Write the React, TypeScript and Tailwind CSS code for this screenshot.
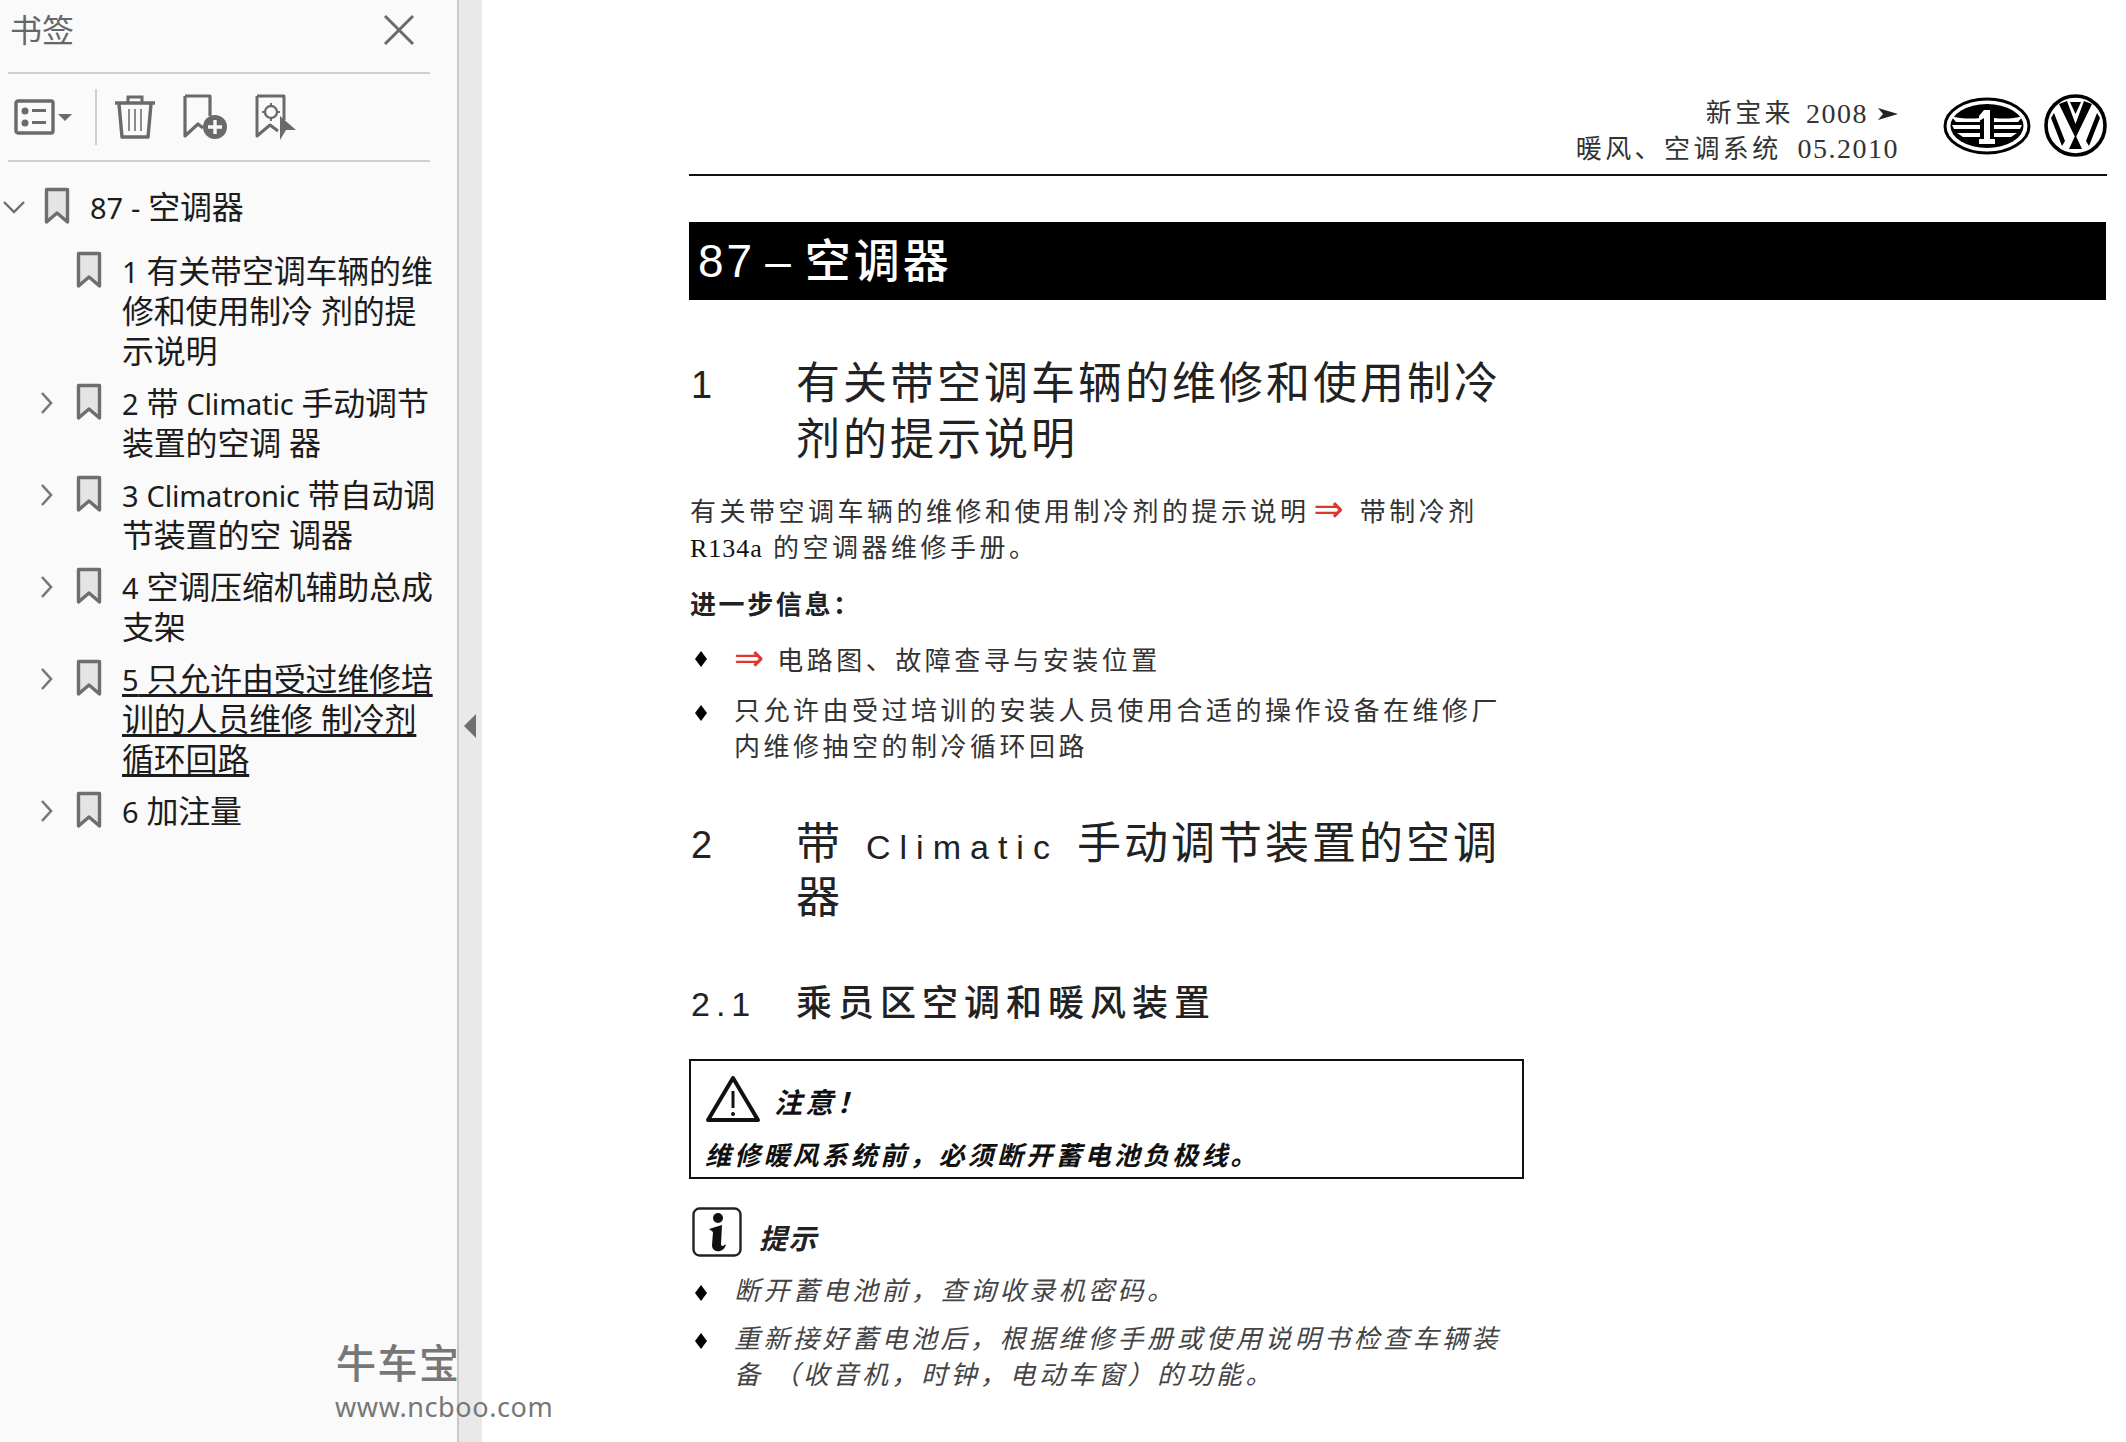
import React from "react";

const cjk = '"Noto Sans", "Noto Sans CJK SC", sans-serif';
const doc = '"Liberation Serif", "Noto Sans CJK SC", serif';

function Bookmark() {
  return (
    <svg width="26" height="38" viewBox="0 0 26 38" className="shrink-0">
      <path d="M2.5 2.5 H23.5 V35 L13 26 L2.5 35 Z" fill="#e4e4e4" stroke="#6e6e6e" strokeWidth="3.4" strokeLinejoin="round" />
    </svg>
  );
}

function Chevron({ open }: { open?: boolean }) {
  return open ? (
    <svg width="24" height="14" viewBox="0 0 24 14" className="shrink-0">
      <path d="M2 2 L12 12 L22 2" fill="none" stroke="#6e6e6e" strokeWidth="2.4" />
    </svg>
  ) : (
    <svg width="13" height="24" viewBox="0 0 13 24" className="shrink-0">
      <path d="M2 2 L11 12 L2 22" fill="none" stroke="#777" strokeWidth="2.6" />
    </svg>
  );
}

function Label({ text }: { text: string }) {
  return (
    <>
      {text.split(/([A-Za-z0-9\-]+)/).map((part, i) =>
        /^[A-Za-z0-9\-]+$/.test(part) ? (
          <span key={i} className="text-[29px] leading-none">{part}</span>
        ) : (
          <span key={i}>{part}</span>
        )
      )}
    </>
  );
}

function Item({ lines, chevron = true, underline = false }: { lines: string[]; chevron?: boolean; underline?: boolean }) {
  return (
    <div className="flex items-start">
      <div className="w-[76px] pl-[40px] h-[40px] flex items-center shrink-0">{chevron && <Chevron />}</div>
      <div className="w-[46px] shrink-0"><Bookmark /></div>
      <div className={`text-[32px] leading-[40px] text-[#1c1c1c] whitespace-nowrap tracking-[-0.2px] ${underline ? "underline underline-offset-[3px]" : ""}`}>
        {lines.map((l) => (
          <div key={l}><Label text={l} /></div>
        ))}
      </div>
    </div>
  );
}

function Sidebar() {
  return (
    <aside className="w-[459px] shrink-0 h-full bg-[#fafafa] border-r-2 border-[#c9c9c9] flex flex-col" style={{ fontFamily: cjk }}>
      <div className="h-[74px] ml-[8px] mr-[27px] flex items-center justify-between border-b-2 border-[#cfcfcf] pb-[12px]">
        <span className="text-[32px] leading-[40px] text-[#666] ml-[2px]">书签</span>
        <svg width="34" height="34" viewBox="0 0 34 34" className="mr-[14px]">
          <path d="M3 3 L31 31 M31 3 L3 31" stroke="#6a6a6a" strokeWidth="3" />
        </svg>
      </div>
      <div className="h-[88px] ml-[8px] mr-[27px] flex items-center border-b-2 border-[#cfcfcf]">
        <svg width="66" height="36" viewBox="0 0 66 36" className="ml-[6px]">
          <rect x="2" y="2" width="37" height="32" rx="2" fill="none" stroke="#6a6a6a" strokeWidth="3.4" />
          <circle cx="11" cy="12" r="3.5" fill="#6a6a6a" />
          <circle cx="11" cy="24" r="3.5" fill="#6a6a6a" />
          <rect x="18" y="10" width="14" height="3" fill="#6a6a6a" />
          <rect x="18" y="22" width="14" height="3" fill="#6a6a6a" />
          <path d="M44 15 H58 L51 22 Z" fill="#6a6a6a" />
        </svg>
        <div className="w-[2px] h-[56px] bg-[#cfcfcf] ml-[15px]" />
        <svg width="44" height="46" viewBox="0 0 44 46" className="ml-[16px]">
          <path d="M2 9 H42" stroke="#6a6a6a" strokeWidth="3.4" />
          <path d="M15 8 V3 H29 V8" fill="none" stroke="#6a6a6a" strokeWidth="3" />
          <path d="M6 10 L9 43 H35 L38 10" fill="none" stroke="#6a6a6a" strokeWidth="3.4" strokeLinejoin="round" />
          <path d="M16 15 V37 M22 15 V37 M28 15 V37" stroke="#8a8a8a" strokeWidth="2" />
        </svg>
        <svg width="46" height="46" viewBox="0 0 46 46" className="ml-[26px]">
          <path d="M2 2 H27 V22 M2 2 V42 L15 30 L20 34" fill="none" stroke="#6a6a6a" strokeWidth="3.2" strokeLinejoin="round" />
          <circle cx="32" cy="33" r="12" fill="#6a6a6a" />
          <path d="M32 26 V40 M25 33 H39" stroke="#fafafa" strokeWidth="3.4" />
        </svg>
        <svg width="42" height="46" viewBox="0 0 42 46" className="ml-[26px]">
          <path d="M2 2 H29 V26 M2 2 V42 L15 31 L23 37" fill="none" stroke="#6a6a6a" strokeWidth="3" strokeLinejoin="round" />
          <circle cx="16" cy="18" r="6" fill="none" stroke="#6a6a6a" strokeWidth="2.4" />
          <path d="M16 9 V13 M16 23 V27 M7 18 H11 M21 18 H25" stroke="#6a6a6a" strokeWidth="2" />
          <path d="M25 22 L41 36 L31 36 L25 46 Z" fill="#6a6a6a" />
        </svg>
      </div>
      <div className="flex items-start mt-[25px]">
        <div className="w-[44px] pl-[2px] h-[40px] flex items-center shrink-0"><Chevron open /></div>
        <div className="w-[46px] shrink-0"><Bookmark /></div>
        <span className="text-[32px] leading-[40px] text-[#1c1c1c] whitespace-nowrap tracking-[-0.2px]"><Label text="87 - 空调器" /></span>
      </div>
      <div className="flex flex-col gap-[12px] mt-[24px]">
        <Item chevron={false} lines={["1 有关带空调车辆的维", "修和使用制冷 剂的提", "示说明"]} />
        <Item lines={["2 带 Climatic 手动调节", "装置的空调 器"]} />
        <Item lines={["3 Climatronic 带自动调", "节装置的空 调器"]} />
        <Item lines={["4 空调压缩机辅助总成", "支架"]} />
        <Item underline lines={["5 只允许由受过维修培", "训的人员维修 制冷剂", "循环回路"]} />
        <Item lines={["6 加注量"]} />
      </div>
    </aside>
  );
}

function FawLogo() {
  return (
    <svg width="88" height="58" viewBox="0 0 88 58">
      <ellipse cx="44" cy="29" rx="42" ry="27" fill="#fff" stroke="#000" strokeWidth="3" />
      <ellipse cx="44" cy="29" rx="36.5" ry="22" fill="#000" />
      <path d="M8 19 C18 22 28 22 37 21 V25 H13 Z M9 28 H37 V32 H11 Z M14 36 H37 V40 H20 Z M51 21 C60 22 70 22 80 19 L75 25 H51 Z M51 28 H79 L77 32 H51 Z M51 36 H74 L68 40 H51 Z" fill="#fff" />
      <path d="M41 13 H47 V42 H52 V47 H36 V42 H41 V21 L36 24 V19 Z" fill="#fff" />
    </svg>
  );
}

function VwLogo() {
  return (
    <svg width="63" height="63" viewBox="0 0 63 63">
      <circle cx="31.5" cy="31.5" r="29.5" fill="#fff" stroke="#000" strokeWidth="3.6" />
      <path d="M15 10 L23 7 L31.5 30 L40 7 L48 10 L31.5 44 Z" fill="#000" />
      <path d="M26 8 H37 L31.5 20 Z" fill="#000" />
      <path d="M7 24 L10 19 L21 47 L18 52 Z M56 24 L53 19 L42 47 L45 52 Z" fill="#000" />
      <path d="M31.5 41 L38 55 H25 Z" fill="#000" />
    </svg>
  );
}

function WarnIcon() {
  return (
    <svg width="56" height="50" viewBox="0 0 56 50" className="shrink-0">
      <path d="M28 4 L53 46 H3 Z" fill="#fff" stroke="#111" strokeWidth="4" strokeLinejoin="round" />
      <path d="M28 17 V34" stroke="#111" strokeWidth="3" />
      <circle cx="28" cy="40" r="2" fill="#111" />
    </svg>
  );
}

function InfoIcon() {
  return (
    <svg width="50" height="50" viewBox="0 0 50 50" className="shrink-0">
      <rect x="1.5" y="1.5" width="47" height="47" rx="6" fill="#fff" stroke="#222" strokeWidth="2.4" />
      <circle cx="26" cy="11" r="5" fill="#111" />
      <path d="M17 22 L30 18 L29 37 C29 40 32 39 34 37 C33 43 28 45 24 44 C21 43 20 41 20 38 L21 25 Z" fill="#111" />
    </svg>
  );
}

function Diamond() {
  return (
    <svg width="14" height="18" viewBox="0 0 14 18" className="shrink-0 ml-[5px] mr-[26px] mt-[10px]">
      <path d="M7 1 L13 9 L7 17 L1 9 Z" fill="#000" />
    </svg>
  );
}

function Arrow() {
  return <span className="text-[#e0352f] font-['DejaVu_Sans'] tracking-normal text-[36px] leading-none">⇒</span>;
}

const latin = "tracking-[1.5px] text-[28px] leading-none";

function Doc() {
  return (
    <main className="flex-1 h-full bg-white pl-[207px] pr-[19px] pt-[96px] overflow-hidden" style={{ fontFamily: doc }}>
      <div className="flex justify-end">
        <div className="text-[26px] leading-[36px] tracking-[3.4px] text-[#333] text-right whitespace-nowrap">
          <div className="flex items-center justify-end">
            新宝来 <span className={`${latin} ml-[12px]`}>2008</span>
            <svg width="22" height="14" viewBox="0 0 22 14" className="ml-[9px]">
              <path d="M1 1 L21 7 L1 13 L6 7 Z" fill="#222" />
            </svg>
          </div>
          <div>
            暖风、空调系统 <span className={`${latin} ml-[6px]`}>05.2010</span>
          </div>
        </div>
        <div className="flex items-center h-[63px] -mt-[2px] ml-[44px] gap-[13px]">
          <FawLogo />
          <VwLogo />
        </div>
      </div>
      <div className="h-[2px] bg-[#111] mt-[6px]" />
      <div className="h-[78px] bg-black mt-[46px] mr-[1px] flex items-center pl-[9px] text-white text-[46px] tracking-[3px] font-bold whitespace-nowrap">
        <span className="font-['Liberation_Sans'] font-normal">87</span>
        <span className="ml-[10px] font-['Liberation_Sans'] font-normal">–</span>
        <span className="ml-[11px] font-medium">空调器</span>
      </div>

      <div className="flex mt-[57px] text-[44px] leading-[56px] tracking-[3px] text-[#222] whitespace-nowrap">
        <div className="font-['Liberation_Sans'] w-[107px] pl-[2px] text-[38px]">1</div>
        <div>
          有关带空调车辆的维修和使用制冷
          <br />
          剂的提示说明
        </div>
      </div>

      <div className="mt-[22px] text-[26px] leading-[36px] tracking-[3.5px] text-[#333] whitespace-nowrap pl-[1px]">
        <div>
          有关带空调车辆的维修和使用制冷剂的提示说明<span className="ml-[4px]"><Arrow /></span> <span className="ml-[6px]">带制冷剂</span>
        </div>
        <div>
          <span className="text-[26px] tracking-[1px] text-[#111] leading-none">R134a</span> 的空调器维修手册。
        </div>
      </div>
      <div className="mt-[21px] text-[26px] leading-[36px] tracking-[2.6px] font-bold text-[#222] pl-[1px]">进一步信息：</div>

      <div className="mt-[16px] flex text-[26px] leading-[36px] tracking-[3.5px] text-[#333] whitespace-nowrap">
        <Diamond />
        <div>
          <Arrow /> <span className="ml-[3px]">电路图、故障查寻与安装位置</span>
        </div>
      </div>
      <div className="mt-[14px] flex text-[26px] leading-[36px] tracking-[3.5px] text-[#333] whitespace-nowrap">
        <Diamond />
        <div>
          只允许由受过培训的安装人员使用合适的操作设备在维修厂
          <br />
          内维修抽空的制冷循环回路
        </div>
      </div>

      <div className="flex mt-[52px] text-[44px] leading-[54px] tracking-[3px] text-[#222] whitespace-nowrap">
        <div className="font-['Liberation_Sans'] w-[107px] pl-[2px] text-[38px]">2</div>
        <div>
          带<span className="font-['Liberation_Sans'] text-[34px] tracking-[9px] leading-none ml-[23px] mr-[18px]">Climatic</span>手动调节装置的空调
          <br />
          器
        </div>
      </div>

      <div className="flex mt-[54px] text-[36px] leading-[48px] tracking-[6px] font-medium text-[#222] whitespace-nowrap">
        <div className="font-['Liberation_Sans'] font-normal w-[107px] pl-[2px] text-[34px]">2.1</div>
        <div>乘员区空调和暖风装置</div>
      </div>

      <div className="mt-[31px] w-[835px] h-[120px] border-2 border-[#111] pl-[14px] pt-[13px] text-[#111] italic font-bold text-[26px] tracking-[3.2px] whitespace-nowrap">
        <div className="flex items-center h-[50px]">
          <WarnIcon />
          <span className="ml-[13px] mt-[10px] text-[28px]">注意！</span>
        </div>
        <div className="leading-[36px] mt-[15px]">维修暖风系统前，必须断开蓄电池负极线。</div>
      </div>

      <div className="flex items-center mt-[28px] ml-[3px] h-[50px] italic font-bold text-[28px] tracking-[1.6px] text-[#222]">
        <InfoIcon />
        <span className="ml-[17px] mt-[16px]">提示</span>
      </div>
      <div className="mt-[17px] flex text-[26px] leading-[36px] tracking-[3.5px] italic text-[#444] whitespace-nowrap">
        <Diamond />
        <div>断开蓄电池前，查询收录机密码。</div>
      </div>
      <div className="mt-[12px] flex text-[26px] leading-[36px] tracking-[3.5px] italic text-[#444] whitespace-nowrap">
        <Diamond />
        <div>
          重新接好蓄电池后，根据维修手册或使用说明书检查车辆装
          <br />
          备 （收音机，时钟，电动车窗）的功能。
        </div>
      </div>
    </main>
  );
}

export default function App() {
  return (
    <div className="relative flex w-[2126px] h-[1442px] overflow-hidden bg-white">
      <Sidebar />
      <div className="w-[23px] shrink-0 h-full bg-[#e9e9e9] flex items-center justify-center pr-[2px]">
        <svg width="12" height="24" viewBox="0 0 12 24" className="mt-[10px]">
          <path d="M12 0 V24 L0 12 Z" fill="#6f6f6f" />
        </svg>
      </div>
      <Doc />
      <div className="absolute left-[335px] top-[1338px] text-[#777] pointer-events-none" style={{ fontFamily: cjk }}>
        <div className="text-[40px] leading-[50px] tracking-[1.5px] font-medium ml-[1px]">牛车宝</div>
        <div className="text-[27px] leading-[36px] tracking-[0.6px] mt-[1px]">www.ncboo.com</div>
      </div>
    </div>
  );
}
